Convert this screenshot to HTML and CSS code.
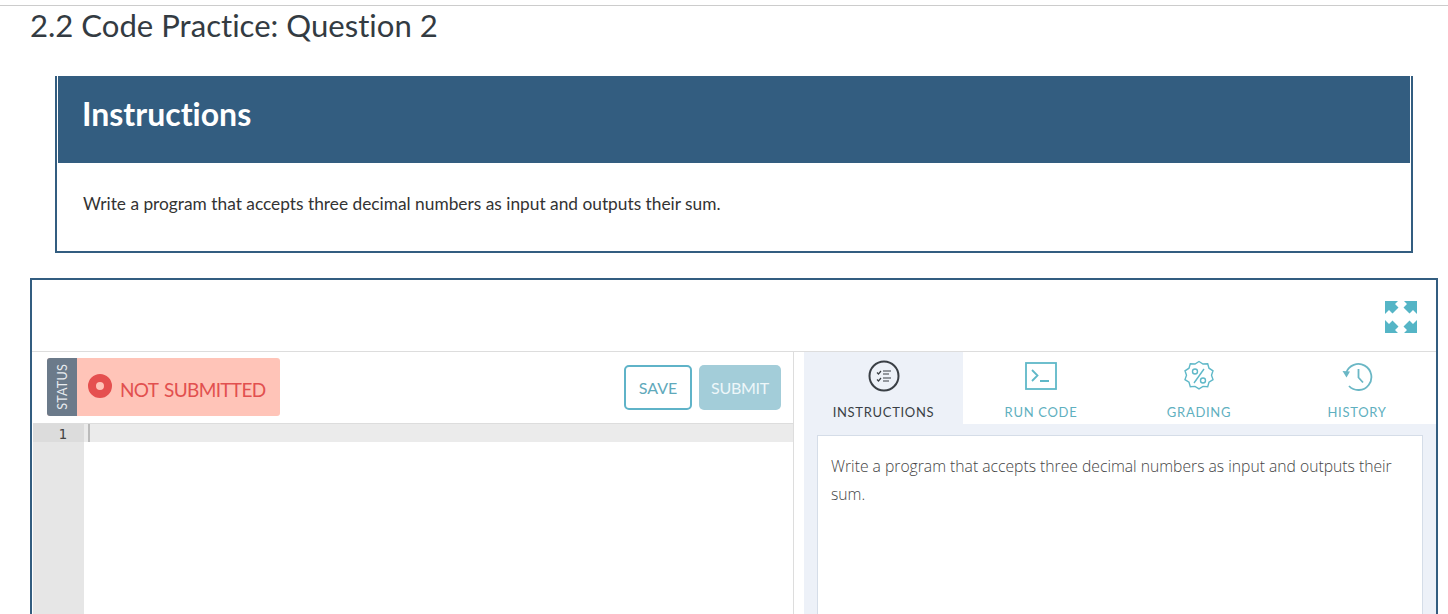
FILE: index.html
```html
<!DOCTYPE html>
<html lang="en">
<head>
<meta charset="utf-8">
<title>2.2 Code Practice: Question 2</title>
<link rel="stylesheet" href="styles.css">
</head>
<body>
<div class="topline"></div>
<h1 class="page-title">2.2 Code Practice: Question 2</h1>
<section class="instructions">
  <h2 class="instructions-head">Instructions</h2>
  <p class="instructions-body">Write a program that accepts three decimal numbers as input and outputs their sum.</p>
</section>
<section class="workspace">
  <div class="ws-top">
    <svg class="fs-icon" width="34" height="34" viewBox="0 0 34 34" fill="#55b5c6">
      <path d="M1 1h13l-3 3 3.500 3.500-6 6L5 10l-4 4z"/>
      <path d="M33 1H20l3 3-3.500 3.500 6 6L29 10l4 4z"/>
      <path d="M1 33h13l-3-3 3.500-3.500-6-6L5 24l-4-4z"/>
      <path d="M33 33H20l3-3-3.500-3.500 6-6L29 24l4-4z"/>
    </svg>
  </div>
  <div class="ws-main">
    <div class="left">
      <div class="toolbar">
        <div class="status">
          <span class="status-tag"><span class="status-tag-text">STATUS</span></span>
          <span class="status-value"><span class="status-dot"></span>NOT SUBMITTED</span>
        </div>
        <div class="actions">
          <button class="btn btn-save">SAVE</button>
          <button class="btn btn-submit">SUBMIT</button>
        </div>
      </div>
      <div class="editor">
        <div class="gutter"><div class="gutter-line">1</div></div>
        <div class="code"><div class="code-line"><span class="cursor"></span></div></div>
      </div>
    </div>
    <div class="right">
      <div class="tabs">
        <div class="tab tab-active">
          <svg class="tab-icon" width="32" height="32" viewBox="0 0 32 32" fill="none" stroke="#3a3f45" stroke-width="2">
            <circle cx="16" cy="16" r="14.500"/>
            <path stroke-width="1.200" d="M9 12.500l1.500 1.500 2.500-3M9 19.500l1.500 1.500 2.500-3M15 11h8M15 14h6M15 18h8M15 21h6"/>
          </svg>
          <span>INSTRUCTIONS</span>
        </div>
        <div class="tab">
          <svg class="tab-icon" width="32" height="32" viewBox="0 0 32 32" fill="none" stroke="#5fb8c8" stroke-width="1.800">
            <rect x="1" y="3" width="30" height="26"/>
            <path d="M7 10l5.500 5.500L7 21M15 21h9"/>
          </svg>
          <span>RUN CODE</span>
        </div>
        <div class="tab">
          <svg class="tab-icon" width="32" height="32" viewBox="0 0 32 32" fill="none" stroke="#5fb8c8" stroke-width="1.400">
            <path d="M16 1.500l4 2.500 4.700-.3 1.300 4.500 4 2.600-1.500 4.400 1.500 4.400-4 2.600-1.300 4.500-4.700-.3-4 2.500-4-2.500-4.700.3L6 22.200l-4-2.600 1.500-4.400L2 10.800l4-2.600 1.300-4.500 4.700.3z"/>
            <circle cx="12" cy="11.500" r="2.500"/>
            <circle cx="20" cy="20.500" r="2.500"/>
            <path d="M21 9L11 23"/>
          </svg>
          <span>GRADING</span>
        </div>
        <div class="tab">
          <svg class="tab-icon" width="32" height="32" viewBox="0 0 32 32" fill="none" stroke="#6ab7c5" stroke-width="1.800">
            <path d="M5.200 12.500A13 13 0 1 1 8 26"/>
            <path d="M1.500 11l7.500.5-3.500 6z" fill="#6ab7c5" stroke="none"/>
            <path d="M17.500 9v8.500l4.500 5"/>
          </svg>
          <span>HISTORY</span>
        </div>
      </div>
      <div class="panel">
        <div class="card">Write a program that accepts three decimal numbers as input and outputs their sum.</div>
      </div>
    </div>
  </div>
</section>
</body>
</html>
```
FILE: styles.css
```css
* { box-sizing: border-box; }
html, body { margin: 0; padding: 0; height: 614px; overflow: hidden; background: #fff; }
body { font-family: Lato, "Liberation Sans", sans-serif; color: #333; font-variant-ligatures: none; }

.topline { height: 6px; border-bottom: 1px solid #ccc; }

.page-title {
  margin: 0 0 0 30px;
  height: 40px;
  font-size: 31.100px;
  font-weight: 400;
  line-height: 38px;
  color: #333b42;
}

.instructions {
  margin: 30px 0 0 55px;
  width: 1358px;
  height: 177px;
  border: 2px solid #335d80;
  border-top: 0;
}
.instructions-head {
  margin: 0 1px;
  height: 87px;
  padding-left: 24px;
  background: #335d80;
  color: #fff;
  font-size: 32px;
  font-weight: 700;
  line-height: 76px;
}
.instructions-body {
  margin: 0;
  padding: 28px 0 0 26px;
  font-size: 17.320px;
  line-height: 26px;
  color: #333;
}

.workspace {
  margin: 25px 0 0 30px;
  width: 1408px;
  height: 336px;
  border: 2px solid #335d80;
  border-bottom: 0;
  overflow: hidden;
}
.ws-top {
  height: 72px;
  border-bottom: 1px solid #ddd;
  display: flex;
  justify-content: flex-end;
  align-items: center;
  padding-right: 18px;
}
.fs-icon { display: block; margin-top: 2px; }

.ws-main { display: flex; height: 264px; }
.left { width: 762px; border-right: 1px solid #ddd; flex: none; }
.toolbar {
  height: 71px;
  display: flex;
  justify-content: space-between;
  padding: 6px 12px 0 15px;
}
.status {
  display: flex;
  width: 233px;
  height: 58px;
  border-radius: 3px;
  overflow: hidden;
  background: #ffc4b8;
}
.status-tag {
  width: 30px;
  background: #6b7a8a;
  display: flex;
  align-items: center;
  justify-content: center;
}
.status-tag-text {
  writing-mode: vertical-rl;
  transform: rotate(180deg);
  color: #e8ecf0;
  font-size: 12.600px;
  letter-spacing: .2px;
}
.status-value {
  display: flex;
  align-items: center;
  padding: 4px 0 0 11px;
  color: #e2504f;
  font-size: 19px;
  letter-spacing: -.65px;
  word-spacing: 2px;
  white-space: nowrap;
}
.status-dot {
  width: 24px;
  height: 24px;
  margin: -6px 8px 0 0;
  border: 8px solid #e5504f;
  border-radius: 50%;
  flex: none;
}
.actions { display: flex; gap: 7px; padding-top: 7px; }
.btn {
  height: 45px;
  font-family: Lato, "Liberation Sans", sans-serif;
  font-size: 16px;
  border-radius: 5px;
  padding: 0;
}
.btn-save { width: 68px; background: #fff; border: 2px solid #5fb3c8; color: #5fa9bb; }
.btn-submit { width: 82px; background: #a3cdd9; border: 0; color: #eef7f9; letter-spacing: -.3px; }

.editor { display: flex; height: 193px; border-top: 1px solid #ddd; margin-left: 1px; }
.gutter { width: 51px; background: #e6e6e6; flex: none; }
.gutter-line {
  height: 18px;
  background: #dcdcdc;
  text-align: right;
  padding-right: 17px;
  font-family: "DejaVu Sans Mono", monospace;
  font-size: 14px;
  line-height: 21px;
  color: #444;
}
.code { flex: 1; }
.code-line { height: 18px; background: #ebebeb; padding-left: 4px; }
.cursor { display: block; width: 2px; height: 18px; background: #bbb; }

.right { flex: 1; margin-left: 10px; background: #edf1f8; width: 632px; }
.tabs { display: flex; height: 72px; background: #fff; }
.tab {
  width: 158px;
  display: flex;
  flex-direction: column;
  align-items: center;
  padding-top: 8px;
  font-size: 13px;
  line-height: 16px;
  letter-spacing: .7px;
  color: #5fb0c0;
}
.tab-active { background: #edf1f8; color: #3a3f45; width: 159px; margin-right: -1px; }
.tab-icon { display: block; margin-bottom: 12px; }

.panel { padding: 11px 13px 0 13px; }
.card {
  height: 300px;
  background: #fff;
  border: 1px solid #d5dde8;
  padding: 16px 13px;
  font-family: "Open Sans", sans-serif;
  font-weight: 300;
  font-size: 15.700px;
  line-height: 28px;
  color: #444;
}
```
